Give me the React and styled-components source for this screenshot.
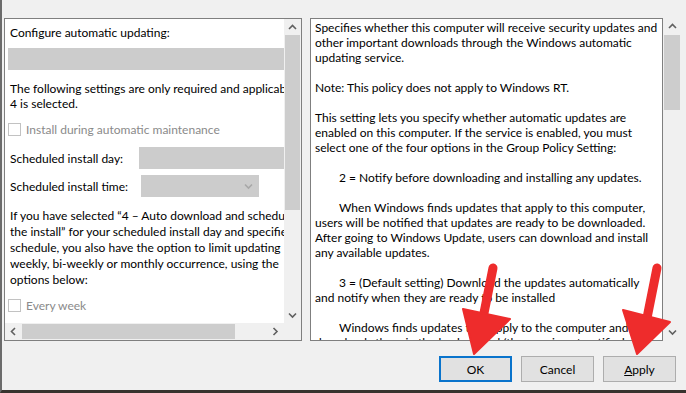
import React from "react";
import styled, { createGlobalStyle } from "styled-components";

const GlobalStyle = createGlobalStyle`
  html, body {
    margin: 0;
    padding: 0;
    background: #f0f0f0;
  }
  body {
    font-family: Lato, "Liberation Sans", sans-serif;
    font-size: 12px;
    color: #000;
  }
`;

const Window = styled.div`
  position: relative;
  width: 686px;
  height: 393px;
  box-sizing: border-box;
  background: #f0f0f0;
  border-left: 2px solid #6b6b6b;
  border-bottom: 3px solid #37332e;
  padding-top: 18px;
  display: flex;
  flex-direction: column;
  overflow: hidden;
`;

const Panels = styled.div`
  display: flex;
  padding-left: 2px;
  gap: 8px;
  height: 323px;
`;

const LeftPanel = styled.div`
  width: 298px;
  height: 323px;
  box-sizing: border-box;
  border: 1px solid #7f7f7f;
  background: #fff;
  display: grid;
  grid-template-columns: 1fr 17px;
  grid-template-rows: 1fr 17px;
`;

const LeftContent = styled.div`
  overflow: hidden;
  padding: 6px 0 0 3px;
  white-space: nowrap;
  line-height: 15px;
`;

const Line = styled.div`
  padding-left: 2px;
  height: 15px;
  line-height: 15px;
  margin-top: ${(p) => p.$mt || 0}px;
`;

const GrayBar = styled.div`
  width: 276px;
  height: 22px;
  background: #cccccc;
  margin-top: ${(p) => p.$mt || 0}px;
`;

const CheckRow = styled.div`
  display: flex;
  align-items: center;
  gap: 5px;
  height: 15px;
  margin-top: ${(p) => p.$mt || 0}px;
  color: #8a8a8a;
`;

const Box = styled.span`
  width: 13px;
  height: 13px;
  box-sizing: border-box;
  border: 1px solid #c2c2c2;
  background: #fff;
  flex: none;
`;

const FieldRow = styled.div`
  display: flex;
  align-items: center;
  height: 22px;
  margin-top: ${(p) => p.$mt || 0}px;
`;

const FieldLabel = styled.span`
  width: ${(p) => p.$w}px;
  padding-left: 2px;
  flex: none;
`;

const FieldBox = styled.div`
  width: ${(p) => p.$w}px;
  height: 22px;
  background: #cccccc;
  flex: none;
  display: flex;
  align-items: center;
  justify-content: flex-end;
  padding-right: 6px;
  box-sizing: border-box;
`;

const Para = styled.div`
  margin-top: ${(p) => p.$mt || 0}px;
  line-height: 16px;
  padding-left: 2px;
`;

const VScroll = styled.div`
  display: flex;
  flex-direction: column;
  background: #f0f0f0;
  width: ${(p) => p.$w || 17}px;
`;

const HScroll = styled.div`
  display: flex;
  background: #f0f0f0;
  align-items: stretch;
`;

const ArrowBtn = styled.div`
  flex: none;
  width: ${(p) => p.$w || 17}px;
  height: ${(p) => p.$h || 17}px;
  display: flex;
  align-items: center;
  justify-content: center;
`;

const Track = styled.div`
  flex: 1;
  display: flex;
  flex-direction: ${(p) => (p.$horizontal ? "row" : "column")};
  padding: ${(p) => (p.$horizontal ? "1px 0" : "0 1px")};
`;

const Thumb = styled.div`
  background: #cdcdcd;
  flex: none;
  width: ${(p) => p.$w};
  height: ${(p) => p.$h};
`;

const Corner = styled.div`
  background: #f0f0f0;
`;

const RightArea = styled.div`
  display: flex;
`;

const HelpBox = styled.div`
  width: 353px;
  height: 323px;
  box-sizing: border-box;
  border: 1px solid #7f7f7f;
  background: #fff;
  padding: 1px 0 0 4px;
  overflow: hidden;
  white-space: nowrap;
  line-height: 15px;
`;

const HelpLine = styled.div`
  height: 15px;
  padding-left: ${(p) => (p.$indent ? 24 : 0)}px;
`;

const Buttons = styled.div`
  display: flex;
  justify-content: flex-end;
  gap: 9px;
  margin-top: 15px;
  padding-right: 10px;
`;

const Button = styled.button`
  width: 73px;
  height: 26px;
  box-sizing: border-box;
  background: #e1e1e1;
  border: ${(p) => (p.$primary ? "2px solid #0a74cc" : "1px solid #adadad")};
  font-family: Lato, "Liberation Sans", sans-serif;
  font-size: 12px;
  font-weight: 400;
  color: #000;
  padding: 0;
  u {
    text-decoration: underline;
  }
`;

const Overlay = styled.svg`
  position: absolute;
  left: -2px;
  top: 0;
  pointer-events: none;
`;

const Chevron = ({ dir, color = "#606060" }) => {
  const paths = {
    up: "M1 5 L4.5 1.5 L8 5",
    down: "M1 1.5 L4.5 5 L8 1.5",
    left: "M5 1 L1.5 4.5 L5 8",
    right: "M1.5 1 L5 4.5 L1.5 8",
  };
  const horiz = dir === "left" || dir === "right";
  return (
    <svg width={horiz ? 7 : 9} height={horiz ? 9 : 7} viewBox={horiz ? "0 0 7 9" : "0 0 9 7"}>
      <path d={paths[dir]} fill="none" stroke={color} strokeWidth="1.6" />
    </svg>
  );
};

const helpText = [
  ["Specifies whether this computer will receive security updates and"],
  ["other important downloads through the Windows automatic"],
  ["updating service."],
  [""],
  ["Note: This policy does not apply to Windows RT."],
  [""],
  ["This setting lets you specify whether automatic updates are"],
  ["enabled on this computer. If the service is enabled, you must"],
  ["select one of the four options in the Group Policy Setting:"],
  [""],
  ["2 = Notify before downloading and installing any updates.", true],
  [""],
  ["When Windows finds updates that apply to this computer,", true],
  ["users will be notified that updates are ready to be downloaded."],
  ["After going to Windows Update, users can download and install"],
  ["any available updates."],
  [""],
  ["3 = (Default setting) Download the updates automatically", true],
  ["and notify when they are ready to be installed"],
  [""],
  ["Windows finds updates that apply to the computer and", true],
  ["downloads them in the background (the user is not notified"],
];

const App = () => {
  return (
    <>
      <GlobalStyle />
      <Window>
        <Panels>
          <LeftPanel>
            <LeftContent>
              <Line>Configure automatic updating:</Line>
              <GrayBar $mt={8} />
              <Line $mt={11}>
                The following settings are only required and applicable
              </Line>
              <Line>4 is selected.</Line>
              <CheckRow $mt={11}>
                <Box />
                Install during automatic maintenance
              </CheckRow>
              <FieldRow $mt={10}>
                <FieldLabel $w={129}>Scheduled install day:</FieldLabel>
                <FieldBox $w={150} />
              </FieldRow>
              <FieldRow $mt={6}>
                <FieldLabel $w={131}>Scheduled install time:</FieldLabel>
                <FieldBox $w={118}>
                  <Chevron dir="down" color="#a8a8a8" />
                </FieldBox>
              </FieldRow>
              <Para $mt={11}>
                If you have selected “4 – Auto download and schedule
                <br />
                the install” for your scheduled install day and specified
                <br />
                schedule, you also have the option to limit updating
                <br />
                weekly, bi-weekly or monthly occurrence, using the
                <br />
                options below:
              </Para>
              <CheckRow $mt={10}>
                <Box />
                Every week
              </CheckRow>
            </LeftContent>
            <VScroll>
              <ArrowBtn $h={16}>
                <Chevron dir="up" />
              </ArrowBtn>
              <Track>
                <Thumb $w="100%" $h="175px" />
              </Track>
              <ArrowBtn $h={16}>
                <Chevron dir="down" />
              </ArrowBtn>
            </VScroll>
            <HScroll>
              <ArrowBtn>
                <Chevron dir="left" />
              </ArrowBtn>
              <Track $horizontal>
                <Thumb $w="213px" $h="100%" />
              </Track>
              <ArrowBtn>
                <Chevron dir="right" />
              </ArrowBtn>
            </HScroll>
            <Corner />
          </LeftPanel>
          <RightArea>
            <HelpBox>
              {helpText.map(([t, indent], i) => (
                <HelpLine key={i} $indent={indent}>
                  {t}
                </HelpLine>
              ))}
            </HelpBox>
            <VScroll $w={18}>
              <ArrowBtn $w={18} $h={17}>
                <Chevron dir="up" />
              </ArrowBtn>
              <Track>
                <Thumb $w="100%" $h="75px" />
              </Track>
              <ArrowBtn $w={18} $h={17}>
                <Chevron dir="down" />
              </ArrowBtn>
            </VScroll>
          </RightArea>
        </Panels>
        <Buttons>
          <Button $primary>OK</Button>
          <Button>Cancel</Button>
          <Button>
            <u>A</u>pply
          </Button>
        </Buttons>
        <Overlay width="686" height="393" viewBox="0 0 686 393">
          <g fill="#ee2c2c" stroke="#ee2c2c" strokeLinejoin="round">
            <line x1="493" y1="268" x2="483" y2="318" strokeWidth="9" strokeLinecap="round" />
            <polygon points="463,309 510,319 474,354" strokeWidth="2" />
            <line x1="657" y1="268" x2="647" y2="318" strokeWidth="9" strokeLinecap="round" />
            <polygon points="623,310 670,322 637,354" strokeWidth="2" />
          </g>
        </Overlay>
      </Window>
    </>
  );
};

export default App;
